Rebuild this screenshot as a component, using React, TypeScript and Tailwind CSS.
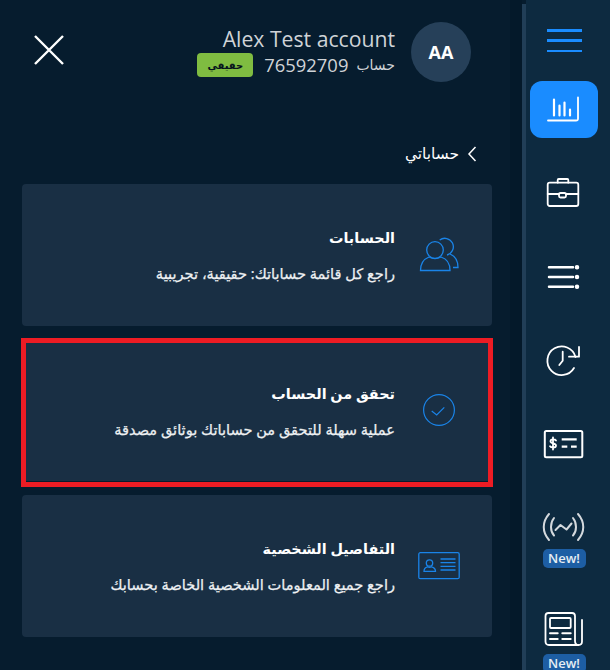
import React from "react";

const FONT = "font-['Open_Sans','DejaVu_Sans',sans-serif]";

const cards = [
  {
    title: "الحسابات",
    text: "راجع كل قائمة حساباتك: حقيقية، تجريبية",
    icon: <UsersIcon />,
  },
  {
    title: "تحقق من الحساب",
    text: "عملية سهلة للتحقق من حساباتك بوثائق مصدقة",
    icon: <CheckIcon />,
    marked: true,
  },
  {
    title: "التفاصيل الشخصية",
    text: "راجع جميع المعلومات الشخصية الخاصة بحسابك",
    icon: <IdIcon />,
  },
];

function UsersIcon() {
  return (
    <svg width="40" height="35" viewBox="0 0 40 35" fill="none" stroke="#1a84e8" strokeWidth="1.3">
      <circle cx="16" cy="13" r="8.3" />
      <path d="M1.500 33.500C1.500 26 5 22 10 20c3.500 2 8.500 2 12 0 5 1.500 9 6 9 13.500Z" />
      <path d="M20.700 3A8.500 8.500 0 1 1 28 18" />
      <path d="M31 17c5 2 8 7 8 13.500h-5" />
    </svg>
  );
}

function CheckIcon() {
  return (
    <svg width="34" height="34" viewBox="0 0 34 34" fill="none" stroke="#1a84e8" strokeWidth="1.200">
      <circle cx="17" cy="17" r="15.400" />
      <path d="M9.700 18l5 4 7.600-7.700" />
    </svg>
  );
}

function IdIcon() {
  return (
    <svg width="42" height="28" viewBox="0 0 42 28" fill="none" stroke="#1a84e8" strokeWidth="1.300">
      <rect x="0.800" y="0.700" width="40.400" height="26" rx="1.500" />
      <circle cx="11.500" cy="11" r="3.200" />
      <path d="M6 19.300c0-2.500 1.500-4 3.500-4.500 1.300.7 2.700.7 4 0 2 .5 4 2 4 4.500Z" />
      <path d="M22.500 7h15M22.500 10.700h15M22.500 14.300h15M22.500 18h15" />
    </svg>
  );
}

function RailIcon({ children }: { children: React.ReactNode }) {
  return (
    <svg
      width="40"
      height="40"
      viewBox="0 0 40 40"
      fill="none"
      stroke="white"
      strokeWidth="1.800"
      strokeLinecap="round"
      strokeLinejoin="round"
      className="block shrink-0 overflow-visible"
    >
      {children}
    </svg>
  );
}

function NewBadge() {
  return (
    <span className="flex h-[19px] w-[43px] shrink-0 items-center justify-center rounded-[5px] bg-[#1d5ea4] text-[13px] font-semibold leading-none text-[#e6edf3]">
      New!
    </span>
  );
}

export default function App() {
  return (
    <div className={`flex h-[670px] w-[610px] overflow-hidden bg-[#061c2e] ${FONT}`}>
      {/* Main panel */}
      <div className="w-[510px] shrink-0 pl-[22px] pr-[18px]">
        <header className="flex h-[104px] items-start justify-between pt-[22px]">
          <button className="ml-[11px] mt-[12px]">
            <svg width="32" height="32" viewBox="0 0 32 32" stroke="white" strokeWidth="2.400" className="block">
              <path d="M2 2l28 28M30 2L2 30" />
            </svg>
          </button>
          <div className="flex items-start gap-4 pr-[21px]">
            <div className="flex flex-col items-end pt-[3px]">
              <div className="text-[21.200px] leading-[28px] text-[#cfd3d7]">Alex Test account</div>
              <div className="flex items-center gap-[11px]">
                <span className="flex h-[24px] w-[56px] items-center justify-center rounded-[4px] bg-[#7fbc41] text-[10px] font-bold text-[#06121c]">
                  حقيقي
                </span>
                <span className="flex items-center gap-2 text-[#cfd3d7]">
                  <span className="text-[18.400px] leading-[24px]">76592709</span>
                  <span className="text-[14px] leading-[24px]">حساب</span>
                </span>
              </div>
            </div>
            <div className="flex h-[60px] w-[60px] items-center justify-center rounded-full bg-[#264059] text-[18px] font-bold text-white">
              AA
            </div>
          </div>
        </header>

        <div className="mr-[15px] mt-[36px] flex h-[28px] items-center justify-end gap-[8px] text-[15.400px] text-white">
          <span>حساباتي</span>
          <svg width="10" height="16" viewBox="0 0 10 16" fill="none" stroke="white" strokeWidth="1.500">
            <path d="M8.500 1L2 8l6.500 7" />
          </svg>
        </div>

        <div className="mt-[16px] flex w-[470px] flex-col gap-[14px]">
          {cards.map((card) => (
            <div
              key={card.title}
              className="relative flex h-[141.500px] items-center justify-end gap-[21px] rounded-[4px] bg-[#192f44] pr-[30px]"
            >
              <div dir="rtl" className="flex w-[340px] flex-col gap-[11px] text-white">
                <div className="text-[14.400px] font-bold leading-[26px]">{card.title}</div>
                <div className="text-[14.600px] leading-[22px] text-[#eef1f3] [-webkit-text-stroke:0.25px_#eef1f3]">
                  {card.text}
                </div>
              </div>
              <div className="flex w-[46px] justify-center">{card.icon}</div>
              {card.marked && (
                <div className="absolute -bottom-[6px] -left-[1px] -right-[1px] -top-[1.500px] border-[5px] border-[#ed1c24]" />
              )}
            </div>
          ))}
        </div>
      </div>

      {/* Gutter and scrollbar */}
      <div className="w-[12px] shrink-0 bg-[#04192a]" />
      <div className="mt-[4px] w-[4px] shrink-0 bg-[#213e57]" />

      {/* Icon rail */}
      <nav className="flex w-[84px] shrink-0 flex-col items-center overflow-hidden bg-[#0d2a40] pr-[8px]">
        <div className="mt-[29px] flex h-[23px] w-[35px] shrink-0 flex-col justify-between">
          <span className="h-[2.500px] bg-[#1a8cff]" />
          <span className="h-[2.500px] bg-[#1a8cff]" />
          <span className="h-[2.500px] bg-[#1a8cff]" />
        </div>
        <div className="mt-[29px] flex h-[57px] w-[68px] shrink-0 items-center justify-center rounded-[12px] bg-[#1a8cff]">
          <RailIcon>
            <path d="M4 30.500h28c2 0 2-.5 2-2V7.500" />
            <path d="M10 9.500v16M15.500 15.500v10M20.500 12.500v13M26 19.500v6" strokeWidth="2.200" />
          </RailIcon>
        </div>
        <div className="mt-[35px] shrink-0">
          <RailIcon>
            <rect x="3.700" y="9.700" width="30.600" height="23.300" rx="2" />
            <path d="M3.700 21H15M22 21h12.300M13.700 9.700V7c0-.7.3-1 1-1h8.600c.7 0 1 .3 1 1v2.700" />
            <rect x="15" y="20" width="7" height="4.500" rx="1.500" />
          </RailIcon>
        </div>
        <div className="mt-[44px] shrink-0">
          <RailIcon>
            <path d="M5 10.300h24M5 20h24M5 29.700h24" strokeWidth="2.500" />
            <circle cx="33" cy="10.300" r="1.500" fill="white" strokeWidth="1.500" />
            <circle cx="33" cy="20" r="1.500" fill="white" strokeWidth="1.500" />
            <circle cx="33" cy="29.700" r="1.500" fill="white" strokeWidth="1.500" />
          </RailIcon>
        </div>
        <div className="mt-[44px] shrink-0">
          <RailIcon>
            <path d="M30 27A14.300 14.300 0 1 1 31.500 16" />
            <path d="M35 6v9.700H25" />
            <path d="M18.700 10.700v9l-3.400 4.300" />
          </RailIcon>
        </div>
        <div className="mt-[43px] shrink-0">
          <RailIcon>
            <rect x="0.800" y="7" width="37.500" height="26.300" rx="1.500" strokeWidth="2" />
            <path d="M17.700 15.300h15M17.700 22.700h5.600M27 22.700h5.700" strokeWidth="2.200" strokeLinecap="butt" />
            <path d="M12 16.500c-1-1.500-5.500-1.500-5.500.8 0 2.800 5.500 1.500 5.500 4.400 0 2.300-5 2.200-6 .5M9 13.500v12" strokeWidth="1.800" />
          </RailIcon>
        </div>
        <div className="mt-[43px] flex shrink-0 flex-col items-center gap-[2px]">
          <RailIcon>
            <g stroke="#d4d9dd" strokeWidth="2">
              <path d="M5 7C-2 15-2 25 5 33M34 7c7 8 7 18 0 26" />
              <path d="M10 11c-4 5-4 13 0 17.500M29 11c4 5 4 13 0 17.500" />
              <path d="M11.500 23l5-5 6 4.500 5-6" />
            </g>
          </RailIcon>
          <NewBadge />
        </div>
        <div className="mt-[41px] flex shrink-0 flex-col items-center gap-[5px]">
          <RailIcon>
            <path d="M33 36H5c-2.500 0-3.500-1.500-3.500-3.500V7c0-2 1-3 3-3H28c2 0 3 1 3 3v25c0 2 1 4 3.500 4 2 0 3.500-1.500 3.500-3.500V11" />
            <rect x="6" y="9" width="20.700" height="10" rx="1" />
            <path d="M6 24.300h7.700M18.300 24.300h8.400M6 30h7.700M18.300 30h8.400" strokeWidth="2" />
          </RailIcon>
          <NewBadge />
        </div>
      </nav>
    </div>
  );
}
